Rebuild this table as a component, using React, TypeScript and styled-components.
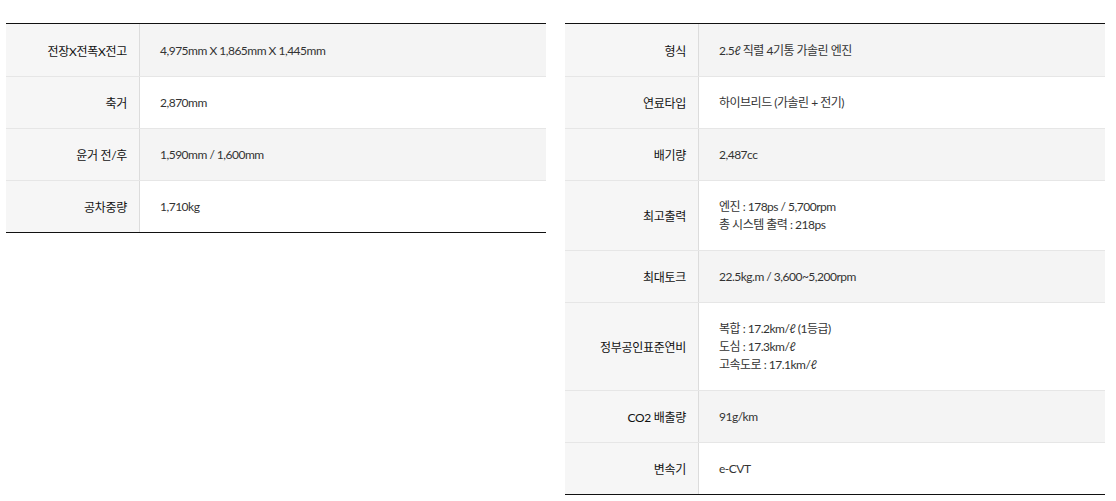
import React from 'react';
import styled, { createGlobalStyle } from 'styled-components';

const GlobalStyle = createGlobalStyle`
  body {
    margin: 0;
    background: #fff;
    font-family: Lato, 'Noto Sans CJK KR', sans-serif;
  }
`;

const Page = styled.div`
  display: flex;
  align-items: flex-start;
  gap: 19px;
  padding: 23px 0 0 6px;
`;

const Table = styled.div`
  width: 540px;
  border-top: 1px solid #111;
  border-bottom: 1px solid #111;
`;

const Row = styled.div<{ $shade: boolean }>`
  display: flex;
  background: ${(p) => (p.$shade ? '#f4f4f4' : '#fff')};
  & + & {
    border-top: 1px solid #e6e6e6;
  }
  &:first-child > div:last-child {
    padding-top: 18px;
  }
`;

const Label = styled.div`
  width: 134px;
  flex-shrink: 0;
  box-sizing: border-box;
  padding-right: 12px;
  display: flex;
  align-items: center;
  justify-content: flex-end;
  background: #f6f6f6;
  border-right: 1px solid #dcdcdc;
  font-size: 12px;
  color: #111;
  letter-spacing: -0.3px;
`;

const Value = styled.div`
  flex: 1;
  padding: 17px 20px 16px;
  font-size: 12px;
  color: #333;
  letter-spacing: -0.5px;
`;

const Line = styled.div`
  height: 18px;
  line-height: 18px;
  white-space: nowrap;
`;

interface Spec {
  label: string;
  lines: string[];
}

const leftSpecs: Spec[] = [
  { label: '전장X전폭X전고', lines: ['4,975mm X 1,865mm X 1,445mm'] },
  { label: '축거', lines: ['2,870mm'] },
  { label: '윤거 전/후', lines: ['1,590mm / 1,600mm'] },
  { label: '공차중량', lines: ['1,710kg'] },
];

const rightSpecs: Spec[] = [
  { label: '형식', lines: ['2.5ℓ 직렬 4기통 가솔린 엔진'] },
  { label: '연료타입', lines: ['하이브리드 (가솔린 + 전기)'] },
  { label: '배기량', lines: ['2,487cc'] },
  { label: '최고출력', lines: ['엔진 : 178ps / 5,700rpm', '총 시스템 출력 : 218ps'] },
  { label: '최대토크', lines: ['22.5kg.m / 3,600~5,200rpm'] },
  {
    label: '정부공인표준연비',
    lines: ['복합 : 17.2km/ℓ (1등급)', '도심 : 17.3km/ℓ', '고속도로 : 17.1km/ℓ'],
  },
  { label: 'CO2 배출량', lines: ['91g/km'] },
  { label: '변속기', lines: ['e-CVT'] },
];

function SpecTable({ specs }: { specs: Spec[] }) {
  return (
    <Table>
      {specs.map((s, i) => (
        <Row key={s.label} $shade={i % 2 === 0}>
          <Label>{s.label}</Label>
          <Value>
            {s.lines.map((l) => (
              <Line key={l}>{l}</Line>
            ))}
          </Value>
        </Row>
      ))}
    </Table>
  );
}

export default function App() {
  return (
    <>
      <GlobalStyle />
      <Page>
        <SpecTable specs={leftSpecs} />
        <SpecTable specs={rightSpecs} />
      </Page>
    </>
  );
}
